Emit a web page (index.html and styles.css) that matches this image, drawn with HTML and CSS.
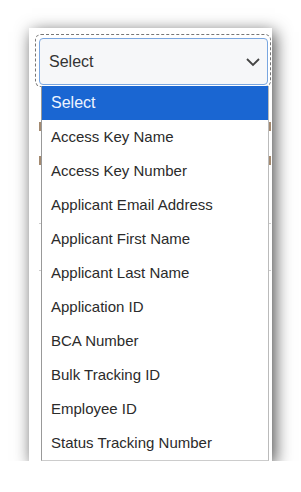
FILE: index.html
```html
<!DOCTYPE html>
<html lang="en">
<head>
  <meta charset="UTF-8" />
  <meta name="viewport" content="width=device-width, initial-scale=1.0"/>
  <title>Search By</title>
  <link rel="stylesheet" href="styles.css">
</head>
<body>
  <div class="cartao">
    <div class="foco">
      <div class="caixa">
        <span>Select</span>
        <svg class="seta" width="16" height="10" viewBox="0 0 16 10">
          <path d="M2 2 L8 8 L14 2" fill="none" stroke="#444" stroke-width="1.8"/>
        </svg>
      </div>
    </div>

    <div class="fundo">
      <div class="linha-fundo"><i></i><b></b></div>
      <div class="linha-fundo"><i></i><b></b></div>
      <div class="linha-fundo traco"></div>
      <div class="linha-fundo traco"></div>
    </div>

    <ul class="lista">
      <li class="ativo">Select</li>
      <li>Access Key Name</li>
      <li>Access Key Number</li>
      <li>Applicant Email Address</li>
      <li>Applicant First Name</li>
      <li>Applicant Last Name</li>
      <li>Application ID</li>
      <li>BCA Number</li>
      <li>Bulk Tracking ID</li>
      <li>Employee ID</li>
      <li>Status Tracking Number</li>
    </ul>
  </div>
</body>
</html>
```

FILE: styles.css
```css
body {
  margin: 0;
  background-color: #fff;
  font-family: 'Liberation Sans', Arial, sans-serif;
}

.cartao {
  position: relative;
  margin: 28px 0 0 29px;
  width: 243px;
  height: 433px;
  background-color: #fff;
  box-shadow: 3px 4px 16px rgba(0, 0, 0, 0.7);
  padding-top: 6px;
  box-sizing: border-box;
}

.foco {
  margin-left: 6px;
  width: 236px;
  height: 53px;
  border: 1px dashed #777;
  border-radius: 6px;
  padding: 3px 2px 0 3px;
  box-sizing: border-box;
}

.caixa {
  height: 47px;
  border: 1px solid #79a6e0;
  border-radius: 4px;
  background-color: #f6f7f9;
  display: flex;
  align-items: center;
  justify-content: space-between;
  padding: 0 6px 0 9px;
  box-sizing: border-box;
  font-size: 16px;
  color: #333;
}

.fundo {
  margin: 22px 0 0 10px;
  width: 232px;
}

.linha-fundo {
  height: 34px;
  display: flex;
  justify-content: space-between;
  align-items: center;
}

.linha-fundo i,
.linha-fundo b {
  display: block;
  width: 2px;
  height: 9px;
  background-color: #a48a70;
}

.traco {
  border-bottom: 1px solid #ccc;
  height: 46px;
}

.lista {
  position: absolute;
  left: 12px;
  top: 58px;
  width: 228px;
  margin: 0;
  padding: 0;
  list-style: none;
  background-color: #fff;
  border-left: 1px solid #999;
  border-right: 1px solid #bbb;
  border-bottom: 1px solid #ccc;
  box-sizing: border-box;
}

.lista li {
  height: 34px;
  line-height: 34px;
  padding-left: 9px;
  font-size: 15px;
  color: #2b2b2b;
}

.lista .ativo {
  background-color: #1a66d2;
  color: #eef4ff;
  font-size: 16px;
}
```
